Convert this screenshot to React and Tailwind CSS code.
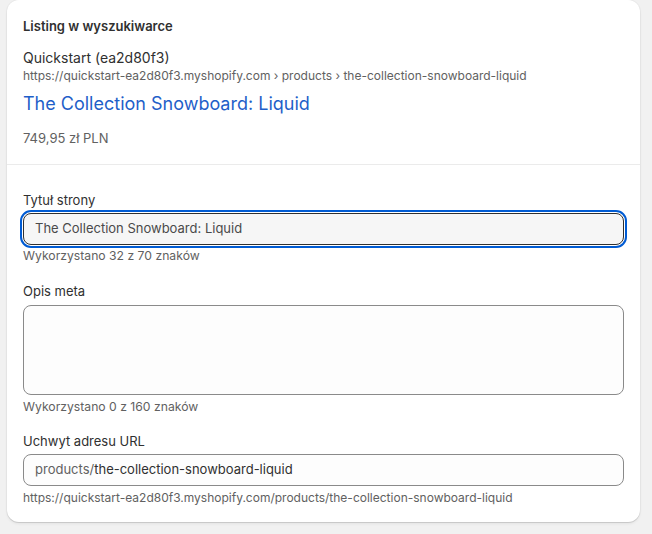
export default function App() {
  return (
    <div className="min-h-screen w-full bg-[#f1f1f1] font-['Inter','Noto_Sans',sans-serif] text-[#303030]">
      <div className="ml-[7px] w-[633px] rounded-xl bg-white shadow-[0_0_0_1px_rgba(0,0,0,0.03),0_1px_0_rgba(26,26,26,0.1),0_2px_3px_rgba(0,0,0,0.06)]">
        <div className="px-4 pt-4 pb-4">
          <h2 className="text-[13px] leading-5 font-semibold text-[#303030]">Listing w wyszukiwarce</h2>
          <div className="mt-3 text-[14px] leading-5 text-[#303030]">Quickstart (ea2d80f3)</div>
          <div className="text-[12px] leading-4 text-[#616161]">
            https://quickstart-ea2d80f3.myshopify.com › products › the-collection-snowboard-liquid
          </div>
          <div className="mt-2 text-[18px] leading-6 text-[#1f5fc9]">The Collection Snowboard: Liquid</div>
          <div className="mt-3 text-[13px] leading-5 text-[#616161]">749,95 zł PLN</div>
        </div>
        <div className="border-t border-[#ebebeb] px-4 pt-[25px] pb-4">
          <label className="block text-[13px] leading-5 text-[#303030]">Tytuł strony</label>
          <div className="mt-[3px] rounded-lg outline-2 outline-offset-1 outline-[#005bd3]">
            <div className="flex h-[32px] items-center rounded-lg border border-[#303030] bg-[#f6f6f6] px-[11px] text-[13px] text-[#4a4a4a]">
              The Collection Snowboard: Liquid
            </div>
          </div>
          <div className="mt-[1px] text-[12.2px] leading-5 text-[#616161]">Wykorzystano 32 z 70 znaków</div>

          <label className="mt-[15px] block text-[13px] leading-5 text-[#303030]">Opis meta</label>
          <div className="mt-1 h-[90px] rounded-lg border border-[#8a8a8a] bg-[#fdfdfd]"></div>
          <div className="mt-[2px] text-[12.2px] leading-5 text-[#616161]">Wykorzystano 0 z 160 znaków</div>

          <label className="mt-[14px] block text-[13px] leading-5 text-[#303030]">Uchwyt adresu URL</label>
          <div className="mt-[3px] flex h-[32px] items-center rounded-lg border border-[#8a8a8a] bg-[#fdfdfd] px-[11px] text-[13px]">
            <span className="text-[#616161]">products/</span>
            <span className="text-[#303030]">the-collection-snowboard-liquid</span>
          </div>
          <div className="mt-[4px] text-[12px] leading-4 text-[#616161]">
            https://quickstart-ea2d80f3.myshopify.com/products/the-collection-snowboard-liquid
          </div>
        </div>
      </div>
    </div>
  );
}
